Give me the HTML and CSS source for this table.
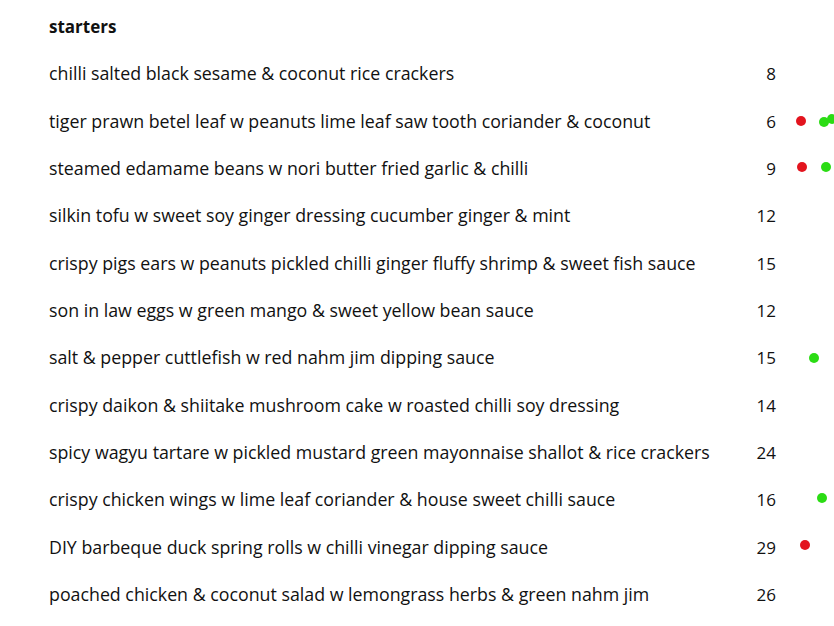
FILE: index.html
```html
<!DOCTYPE html>
<html>
<head>
<meta charset="utf-8">
<link rel="stylesheet" href="styles.css">
</head>
<body>
<div class="menu">
  <h2 class="title">starters</h2>
  <div class="row"><span class="dish">chilli salted black sesame &amp; coconut rice crackers</span><span class="price">8</span></div>
  <div class="row"><span class="dish">tiger prawn betel leaf w peanuts lime leaf saw tooth coriander &amp; coconut</span><span class="price">6</span>
    <i class="dot red" style="--x:796px;--y:18px"></i><i class="dot green" style="--x:819px;--y:19px"></i><i class="dot green" style="--x:827px;--y:16px"></i></div>
  <div class="row"><span class="dish">steamed edamame beans w nori butter fried garlic &amp; chilli</span><span class="price">9</span>
    <i class="dot red" style="--x:797px;--y:17px"></i><i class="dot green" style="--x:821px;--y:17px"></i></div>
  <div class="row"><span class="dish">silkin tofu w sweet soy ginger dressing cucumber ginger &amp; mint</span><span class="price">12</span></div>
  <div class="row"><span class="dish">crispy pigs ears w peanuts pickled chilli ginger fluffy shrimp &amp; sweet fish sauce</span><span class="price">15</span></div>
  <div class="row"><span class="dish">son in law eggs w green mango &amp; sweet yellow bean sauce</span><span class="price">12</span></div>
  <div class="row"><span class="dish">salt &amp; pepper cuttlefish w red nahm jim dipping sauce</span><span class="price">15</span>
    <i class="dot green" style="--x:809px;--y:19px"></i></div>
  <div class="row"><span class="dish">crispy daikon &amp; shiitake mushroom cake w roasted chilli soy dressing</span><span class="price">14</span></div>
  <div class="row"><span class="dish">spicy wagyu tartare w pickled mustard green mayonnaise shallot &amp; rice crackers</span><span class="price">24</span></div>
  <div class="row"><span class="dish">crispy chicken wings w lime leaf coriander &amp; house sweet chilli sauce</span><span class="price">16</span>
    <i class="dot green" style="--x:817px;--y:17px"></i></div>
  <div class="row"><span class="dish">DIY barbeque duck spring rolls w chilli vinegar dipping sauce</span><span class="price">29</span>
    <i class="dot red" style="--x:800px;--y:16px"></i></div>
  <div class="row"><span class="dish">poached chicken &amp; coconut salad w lemongrass herbs &amp; green nahm jim</span><span class="price">26</span></div>
</div>
</body>
</html>
```

FILE: styles.css
```css
html, body {
  margin: 0;
  padding: 0;
  background: #ffffff;
}
body {
  font-family: "Open Sans", "DejaVu Sans", sans-serif;
  color: #111111;
  width: 834px;
  height: 626px;
  overflow: hidden;
}
.menu {
  padding-top: 3px;
}
.title {
  margin: 0;
  padding-left: 49px;
  font-size: 17px;
  font-weight: 700;
  line-height: 47.33px;
}
.row {
  position: relative;
  display: grid;
  grid-template-columns: 1fr auto;
  align-items: baseline;
  padding: 0 58px 0 49px;
  height: 47.33px;
  line-height: 47.33px;
  font-size: 17px;
}
.dish {
  white-space: nowrap;
  font-size: 17.8px;
}
.price {
  text-align: right;
}
.dot {
  position: absolute;
  left: var(--x);
  top: var(--y);
  width: 10px;
  height: 10px;
  border-radius: 50%;
}
.red { background: #e3141e; }
.green { background: #2bdc14; }
```
